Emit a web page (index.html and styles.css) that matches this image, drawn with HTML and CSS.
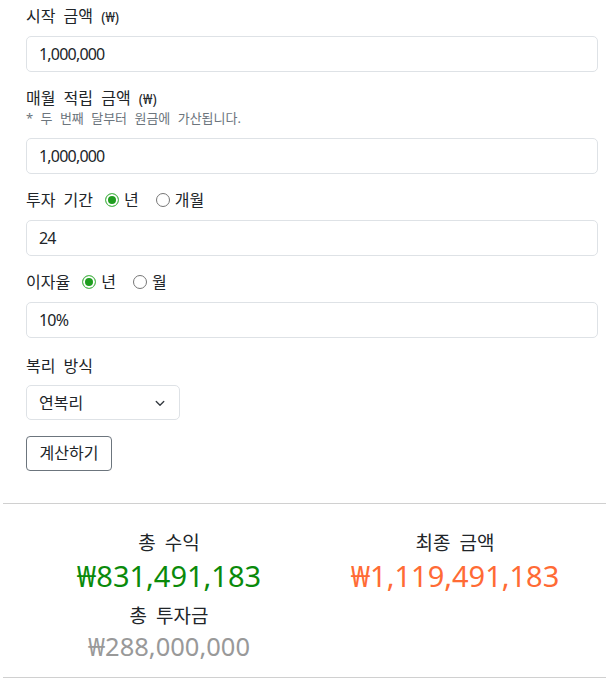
FILE: index.html
```html
<!DOCTYPE html>
<html lang="ko">
<head>
<meta charset="utf-8">
<title>복리 계산기</title>
<link rel="stylesheet" href="styles.css">
</head>
<body>
<div class="app">
  <form class="form">
    <div class="group">
      <label class="label">시작 금액 <small class="unit">(₩)</small></label>
      <input class="control" type="text" value="1,000,000">
    </div>
    <div class="group">
      <label class="label">매월 적립 금액 <small class="unit">(₩)</small></label>
      <div class="hint">* 두 번째 달부터 원금에 가산됩니다.</div>
      <input class="control" type="text" value="1,000,000">
    </div>
    <div class="group">
      <div class="label row">
        <span>투자 기간</span>
        <label class="opt"><input class="radio" type="radio" name="period" checked>년</label>
        <label class="opt"><input class="radio" type="radio" name="period">개월</label>
      </div>
      <input class="control" type="text" value="24">
    </div>
    <div class="group">
      <div class="label row">
        <span>이자율</span>
        <label class="opt"><input class="radio" type="radio" name="rate" checked>년</label>
        <label class="opt"><input class="radio" type="radio" name="rate">월</label>
      </div>
      <input class="control" type="text" value="10%">
    </div>
    <div class="group last">
      <label class="label">복리 방식</label>
      <div class="select-wrap">
        <select class="select">
          <option>연복리</option>
          <option>월복리</option>
        </select>
        <svg class="chev" width="12" height="12" viewBox="0 0 16 16"><path d="M3 6l5 5 5-5" fill="none" stroke="#343a40" stroke-width="1.8" stroke-linecap="round" stroke-linejoin="round"/></svg>
      </div>
    </div>
    <button class="btn" type="button">계산하기</button>
  </form>
  <div class="rule"></div>
  <div class="results">
    <div class="col">
      <div class="r-label">총 수익</div>
      <div class="r-value green">₩831,491,183</div>
      <div class="r-label">총 투자금</div>
      <div class="r-value small gray">₩288,000,000</div>
    </div>
    <div class="col">
      <div class="r-label">최종 금액</div>
      <div class="r-value orange">₩1,119,491,183</div>
    </div>
  </div>
  <div class="rule"></div>
</div>
</body>
</html>
```

FILE: styles.css
```css
* { box-sizing: border-box; }
body {
  margin: 0;
  font-family: "Noto Sans", "Noto Sans CJK KR", sans-serif;
  color: #212529;
  background: #fff;
}
.app { padding-left: 3px; }
.form { padding: 6px 8px 0 23px; }
.group { margin-bottom: 16px; }
.group.last { margin-bottom: 16px; padding-top: 2px; }
.label {
  display: block;
  font-size: 16px;
  line-height: 20px;
  height: 20px;
  margin-bottom: 10px;
  word-spacing: 4px;
}
.group.last .label { margin-bottom: 9px; }
.unit {
  font-size: 14px;
  line-height: 1;
  vertical-align: baseline;
  word-spacing: 0;
}
.hint {
  font-size: 13px;
  line-height: 18px;
  height: 18px;
  color: #6c757d;
  margin-top: -9px;
  margin-bottom: 11px;
  word-spacing: 4px;
}
.row { display: flex; align-items: center; }
.opt {
  display: flex;
  align-items: center;
  margin-left: 12px;
}
.opt + .opt { margin-left: 17px; }
.radio {
  appearance: none;
  -webkit-appearance: none;
  width: 14px;
  height: 14px;
  margin: 0 5px 0 0;
  border: 1px solid #767676;
  border-radius: 50%;
  background: #fff;
}
.radio:checked {
  border-color: #5bbd5b;
  background: #1f9d1f;
  box-shadow: inset 0 0 0 2px #fff;
}
.control {
  display: block;
  width: 100%;
  height: 36px;
  padding: 0 12px;
  font: inherit;
  font-size: 16px;
  line-height: 34px;
  letter-spacing: -0.8px;
  color: #212529;
  border: 1px solid #dee2e6;
  border-radius: 5px;
  background: #fff;
}
.select-wrap { position: relative; width: 154px; }
.select {
  appearance: none;
  -webkit-appearance: none;
  display: block;
  width: 100%;
  height: 35px;
  padding: 0 12px;
  font: inherit;
  font-size: 16px;
  color: #212529;
  border: 1px solid #dee2e6;
  border-radius: 5px;
  background: #fff;
}
.chev { position: absolute; right: 14px; top: 12px; pointer-events: none; }
.btn {
  display: block;
  height: 35px;
  padding: 0 12.5px;
  font: inherit;
  font-size: 16px;
  line-height: 33px;
  color: #212529;
  background: #fff;
  border: 1px solid #6c757d;
  border-radius: 4px;
}
.rule { border-top: 1px solid #d0d0d0; margin-top: 32px; }
.results {
  display: grid;
  grid-template-columns: 1fr 1fr;
  padding: 25px 8px 14px 23px;
}
.results + .rule { margin-top: 0; }
.col { text-align: center; }
.r-label { font-size: 19px; line-height: 28px; word-spacing: 4px; }
.r-value { font-size: 29px; line-height: 34px; margin-top: 2px; margin-bottom: 9px; }
.r-value.small { font-size: 25.5px; margin: -1px 0 0; }
.green { color: #0a8a0a; }
.orange { color: #ff6b35; }
.gray { color: #999; }
```
